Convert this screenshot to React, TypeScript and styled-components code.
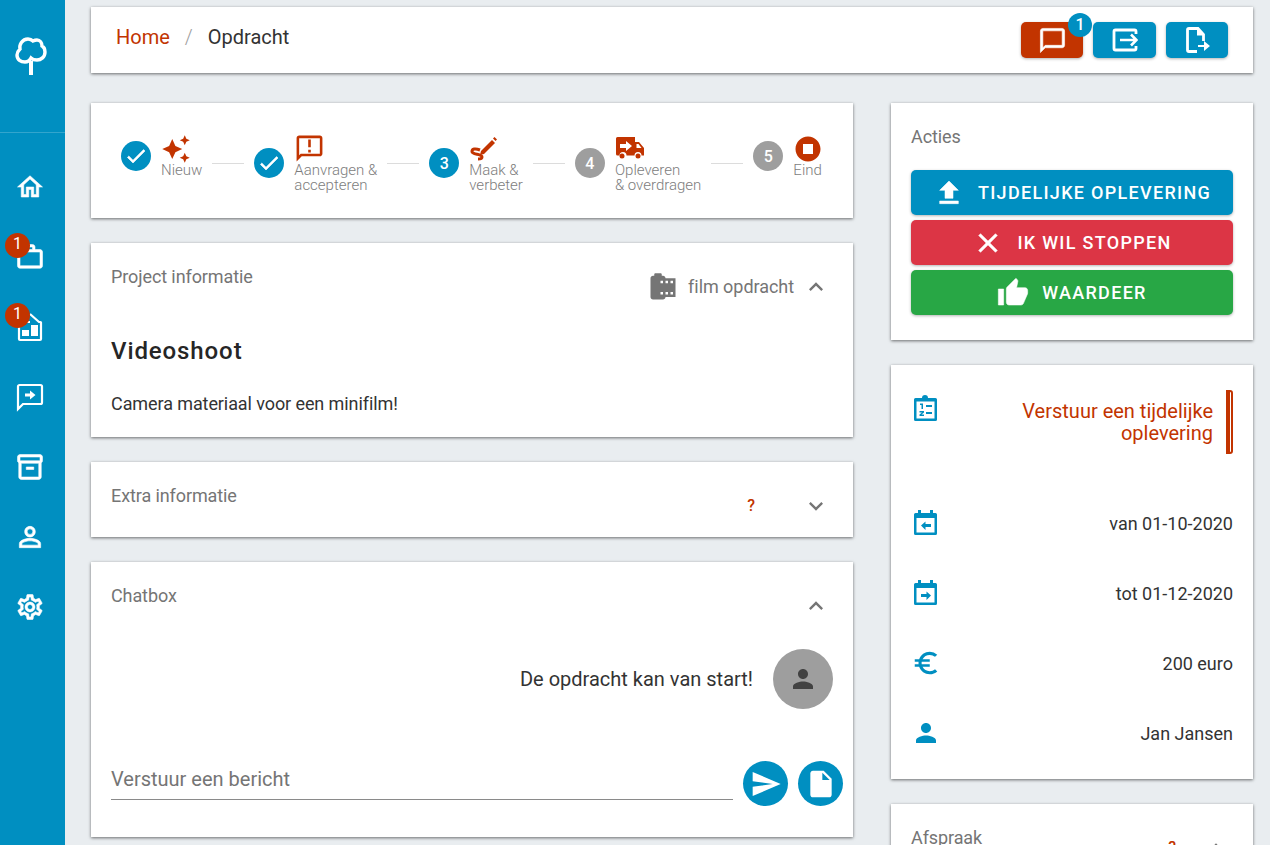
import React from 'react'
import styled, { createGlobalStyle } from 'styled-components'
import {
  MdAutoAwesome,
  MdOutlineAnnouncement,
  MdStopCircle,
  MdCheck,
  MdFileUpload,
  MdClose,
  MdThumbUp,
  MdExpandLess,
  MdExpandMore,
  MdCameraRoll,
  MdSend,
  MdInsertDriveFile,
  MdPerson,
  MdEuroSymbol,
  MdOutlineHome,
  MdWorkOutline,
  MdOutlineInventory2,
  MdPersonOutline,
  MdOutlineSettings,
  MdChatBubbleOutline,
} from 'react-icons/md'

const blue = '#008fc1'
const red = '#c23400'

const GlobalStyle = createGlobalStyle`
  html, body {
    margin: 0;
    height: 100%;
    overflow: hidden;
    background: #e9edf0;
    font-family: Roboto, "Liberation Sans", sans-serif;
  }
  * { box-sizing: border-box; }
  svg [fill='none'] { stroke: none; }
`

const Shell = styled.div`
  display: flex;
  height: 845px;
  overflow: hidden;
`

const Sidebar = styled.nav`
  width: 65px;
  flex-shrink: 0;
  background: ${blue};
  color: #fff;
`

const LogoArea = styled.div`
  height: 133px;
  border-bottom: 1px solid rgba(255, 255, 255, 0.2);
  display: flex;
  justify-content: center;
  padding: 36px 3px 0 0;
`

const NavList = styled.div`
  display: flex;
  flex-direction: column;
  padding-top: 19px;
`

const NavItem = styled.div`
  position: relative;
  height: 70px;
  display: flex;
  align-items: center;
  justify-content: center;
  padding-right: 5px;

  & > svg[stroke='currentColor'] {
    stroke-width: 0.45;
  }
`

const NavBadge = styled.span`
  position: absolute;
  left: 5px;
  top: 11px;
  width: 25px;
  height: 25px;
  border-radius: 50%;
  background: ${red};
  color: #fff;
  font-size: 16px;
  line-height: 22px;
  text-align: center;
`

const Content = styled.div`
  flex: 1;
  padding: 7px 17px 0 26px;
`

const Card = styled.section`
  background: #fff;
  box-shadow: 0 1px 3px rgba(0, 0, 0, 0.55);
`

const TopBar = styled(Card)`
  height: 66px;
  display: flex;
  justify-content: space-between;
  padding: 15px 25px 0;
  margin-bottom: 30px;
`

const Breadcrumb = styled.div`
  display: flex;
  gap: 15px;
  font-size: 20px;
  line-height: 30px;
  color: #333;
`

const CrumbLink = styled.span`
  color: ${red};
`

const CrumbSep = styled.span`
  color: #9e9e9e;
  font-weight: 300;
`

const TopActions = styled.div`
  display: flex;
  gap: 10px;
`

const TopButton = styled.div<{ $bg: string; $w: number }>`
  position: relative;
  width: ${(p) => p.$w}px;
  height: 36px;
  border-radius: 5px;
  background: ${(p) => p.$bg};
  color: #fff;
  display: flex;
  align-items: center;
  justify-content: center;
  box-shadow: 0 1px 3px rgba(0, 0, 0, 0.3);

  & > svg[stroke='currentColor'] {
    stroke-width: 0.5;
  }
`

const TopBadge = styled.span`
  position: absolute;
  right: -9px;
  top: -9px;
  width: 24px;
  height: 24px;
  border-radius: 50%;
  background: ${blue};
  color: #fff;
  font-size: 16px;
  font-weight: 500;
  line-height: 23px;
  text-align: center;
`

const Columns = styled.div`
  display: flex;
  justify-content: space-between;
  align-items: flex-start;
`

const LeftColumn = styled.div`
  width: 762px;
  display: flex;
  flex-direction: column;
  gap: 25px;
`

const RightColumn = styled.div`
  width: 362px;
  display: flex;
  flex-direction: column;
  gap: 25px;
`

const StepperCard = styled(Card)`
  height: 115px;
  display: flex;
  align-items: flex-start;
  gap: 10px;
  padding: 31px 0 0 30px;
`

const Step = styled.div<{ $tall: boolean }>`
  display: flex;
  align-items: center;
  gap: 10px;
  height: ${(p) => (p.$tall ? 58 : 44)}px;
`

const StepCircle = styled.div<{ $bg: string }>`
  width: 30px;
  height: 30px;
  flex-shrink: 0;
  border-radius: 50%;
  background: ${(p) => p.$bg};
  color: #fff;
  font-size: 16px;
  font-weight: 500;
  display: flex;
  align-items: center;
  justify-content: center;

  & > svg {
    stroke-width: 0.6;
  }
`

const StepBody = styled.div`
  display: flex;
  flex-direction: column;
  color: ${red};
  align-self: flex-start;
`

const StepIcon = styled.div`
  height: 29px;
  display: flex;
  align-items: center;
  overflow: visible;
`

const StepLabel = styled.div`
  font-size: 15px;
  font-weight: 300;
  line-height: 15px;
  color: #7d7d7d;
  white-space: nowrap;
`

const StepLine = styled.div`
  width: 32px;
  height: 1px;
  margin-top: 29px;
  background: #dcdcdc;
`

const Panel = styled(Card)`
  padding: 20px;
`

const PanelHead = styled.div`
  display: flex;
  justify-content: space-between;
  align-items: flex-start;
`

const PanelTitle = styled.h3`
  margin: 0;
  font-size: 18px;
  font-weight: 400;
  letter-spacing: -0.1px;
  line-height: 28px;
  color: #757575;
`

const PanelMeta = styled.div<{ $inset: number }>`
  display: flex;
  align-items: center;
  height: 47px;
  padding-right: ${(p) => p.$inset}px;
  color: #757575;
  font-size: 18px;
  letter-spacing: -0.05px;
  gap: 10px;
`

const MetaChevron = styled(MdExpandLess)`
  margin-left: -2px;
`

const Unknown = styled.span<{ $space: number }>`
  color: ${red};
  font-size: 16px;
  font-weight: 500;
  margin-right: ${(p) => p.$space}px;
`

const ProjectPanel = styled(Panel)`
  height: 194px;
`

const ProjectName = styled.h2`
  margin: 24px 0 0;
  font-size: 24px;
  font-weight: 500;
  letter-spacing: 0.9px;
  line-height: 34px;
  color: #262626;
`

const ProjectText = styled.p`
  margin: 24px 0 0;
  font-size: 18px;
  letter-spacing: -0.09px;
  line-height: 24px;
  color: #333;
`

const ExtraPanel = styled(Panel)`
  height: 75px;
`

const ChatPanel = styled(Panel)`
  height: 275px;
  padding-right: 10px;
`

const ChatMessage = styled.div`
  display: flex;
  justify-content: flex-end;
  align-items: center;
  gap: 20px;
  margin: 20px 10px 0 0;
  font-size: 20px;
  color: #333;
`

const Avatar = styled.div`
  width: 60px;
  height: 60px;
  border-radius: 50%;
  background: #9e9e9e;
  color: #424242;
  display: flex;
  align-items: center;
  justify-content: center;
`

const ChatForm = styled.div`
  display: flex;
  align-items: flex-end;
  gap: 10px;
  margin-top: 52px;
`

const ChatInput = styled.div`
  flex: 1;
  height: 39px;
  border-bottom: 1px solid #8a8a8a;
  font-size: 20px;
  line-height: 36px;
  color: #757575;
`

const RoundButton = styled.div`
  width: 45px;
  height: 45px;
  border-radius: 50%;
  background: ${blue};
  color: #fff;
  display: flex;
  align-items: center;
  justify-content: center;
  margin-bottom: -6px;
`

const ActionsPanel = styled(Panel)`
  height: 237px;
`

const ActionList = styled.div`
  display: flex;
  flex-direction: column;
  gap: 5px;
  margin-top: 19px;
`

const ActionButton = styled.div<{ $bg: string }>`
  height: 45px;
  border-radius: 5px;
  background: ${(p) => p.$bg};
  color: #fff;
  font-size: 18px;
  font-weight: 500;
  letter-spacing: 1.3px;
  display: flex;
  align-items: center;
  justify-content: center;
  gap: 13px;
  box-shadow: 0 1px 3px rgba(0, 0, 0, 0.3);

  & > svg {
    stroke-width: 0.4;
  }
`

const TaskCard = styled(Card)`
  height: 414px;
  padding: 25px 20px 0;
`

const TaskRow = styled.div`
  height: 70px;
  display: flex;
  justify-content: space-between;
  align-items: center;
  color: ${blue};
`

const TaskHighlight = styled.div`
  height: 98px;
  display: flex;
  justify-content: space-between;
  align-items: flex-start;
  color: ${blue};
`

const HighlightBox = styled.div`
  display: flex;
  gap: 13px;
`

const HighlightText = styled.div`
  width: 250px;
  padding-top: 10px;
  font-size: 20px;
  line-height: 22px;
  text-align: right;
  color: ${red};
`

const HighlightMarker = styled.div`
  width: 7px;
  height: 64px;
  border: 2px solid ${red};
  border-left-width: 4px;
  border-radius: 0 3px 3px 0;
`

const TaskValue = styled.span`
  font-size: 18px;
  color: #333;
`

const AppointmentCard = styled(Panel)`
  height: 100px;
`

const ClipboardSvg = styled.svg`
  margin-top: 5px;
`

const Logo = () => (
  <svg width="34" height="40" viewBox="0 0 34 40" fill="none" stroke="#fff" strokeWidth="3.4">
    <path d="M17 25v14" strokeWidth="4" stroke="#fff" />
    <path stroke="#fff" d="M11 26c-4 0-8-2-8-7 0-3 2-5 3-6-1-4 2-10 8-10 2 0 4 1 5 2 2-1 3-1 4-1 3 0 5 3 5 6 2 1 3 3 3 6 0 5-4 8-8 8-3 0-5-1-6-2-1 2-3 4-6 4z" />
  </svg>
)

const DocChart = () => (
  <svg width="30" height="30" viewBox="0 0 30 30">
    <path fill="transparent" stroke="#fff" strokeWidth="2.2" d="M15 2l9 8h1.500a.500.500 0 0 1 .500.500V27a1 1 0 0 1-1 1H5a1 1 0 0 1-1-1V10.500a.500.500 0 0 1 .500-.500H15" />
    <rect x="7" y="18" width="7" height="6" fill="#fff" />
    <rect x="16" y="13" width="7" height="11" fill="#fff" />
  </svg>
)

const ChatArrow = () => (
  <svg width="30" height="30" viewBox="0 0 30 30">
    <path fill="transparent" d="M3 27V4.500A1.500 1.500 0 0 1 4.500 3h21A1.500 1.500 0 0 1 27 4.500v16a1.500 1.500 0 0 1-1.500 1.500H8z" stroke="#fff" strokeWidth="2.2" />
    <path d="M10 11.500h5V8.500l5.500 4.500-5.500 4.500v-3h-5z" fill="#fff" />
  </svg>
)

const BoxArrow = () => (
  <svg width="26" height="26" viewBox="0 0 26 26">
    <path fill="transparent" stroke="#fff" d="M24 7V4.500A1.500 1.500 0 0 0 22.500 3h-19A1.500 1.500 0 0 0 2 4.500v17A1.500 1.500 0 0 0 3.500 23h19a1.500 1.500 0 0 0 1.500-1.500V19" strokeWidth="2.8" />
    <path fill="transparent" stroke="#fff" d="M8 13h16M19 7.500l5.500 5.500-5.500 5.500" strokeWidth="2.6" />
  </svg>
)

const FileArrow = () => (
  <svg width="26" height="26" viewBox="0 0 26 26">
    <path fill="transparent" d="M13 24.500H5a1.500 1.500 0 0 1-1.500-1.500V3A1.500 1.500 0 0 1 5 1.500h9l5.500 6V14" stroke="#fff" strokeWidth="2.8" />
    <path d="M13 1.500v7h7z" fill="#fff" />
    <path d="M14 18h6v-4l6 5-6 5v-4h-6z" fill="#fff" />
  </svg>
)

const PenScribble = () => (
  <svg width="30" height="30" viewBox="0 0 30 30">
    <path fill="transparent" stroke={red} d="M11 16c-5-2-8-1-8 1.500 0 3.500 10 2 10 5.500 0 1.500-2 2-4 2" strokeWidth="3" />
    <path d="M12 17L23 6l3 3-11 11-4 1z" fill={red} />
    <path d="M24 4.500l1.500-1.500 2.500 2.500-1.500 1.500z" fill={red} />
  </svg>
)

const TruckArrow = () => (
  <svg width="30" height="30" viewBox="0 0 30 30">
    <path fill={red} d="M1 4.500A1.500 1.500 0 0 1 2.500 3H20v5h4l5 6v7.500h-2.500a3.500 3.500 0 0 0-7 0h-8a3.500 3.500 0 0 0-7 0H2.500A1.500 1.500 0 0 1 1 20z" />
    <circle cx="7" cy="22" r="2.500" fill={red} />
    <circle cx="23" cy="22" r="2.500" fill={red} />
    <path fill="#fff" d="M5 10h6V7l6 5-6 5v-3H5zM21.500 10h2l3 4h-5z" />
  </svg>
)

const ClipboardList = () => (
  <ClipboardSvg width="30" height="32" viewBox="0 0 30 32">
    <path d="M3 4.500A1.500 1.500 0 0 1 4.500 3H11a3 3 0 0 1 6 0h0 1 6.500A1.500 1.500 0 0 1 26 4.500v20a1.500 1.500 0 0 1-1.500 1.500h-20A1.500 1.500 0 0 1 3 24.500z" fill={blue} />
    <rect x="5.500" y="6.500" width="18" height="17" fill="#fff" />
    <rect x="15" y="10" width="6" height="2" fill={blue} />
    <rect x="15" y="17" width="6" height="2" fill={blue} />
    <path d="M9 8.500h3v5.500h-1.500V10H9zM8.500 16h4.500v1.500l-2.500 2H13V21H8.500v-1.500l2.500-2H8.500z" fill={blue} />
  </ClipboardSvg>
)

const CalendarArrow = ({ back }: { back: boolean }) => (
  <svg width="30" height="26" viewBox="0 0 30 26">
    <path d="M3 4.500A1.500 1.500 0 0 1 4.500 3H7V0h3v3h9V0h3v3h2.500A1.500 1.500 0 0 1 26 4.500v19a1.500 1.500 0 0 1-1.500 1.500h-20A1.500 1.500 0 0 1 3 23.500z" fill={blue} />
    <rect x="5.500" y="8" width="18" height="14.500" fill="#fff" />
    <path
      d={back ? 'M10 15.500l4.500-4v2.500H20v3h-5.500V20z' : 'M20 15.500l-4.500-4v2.500H10v3h5.500V20z'}
      fill={blue}
    />
  </svg>
)

const steps = [
  { label: ['Nieuw'], done: true, n: 1, icon: <MdAutoAwesome size={30} />, bg: blue },
  { label: ['Aanvragen &', 'accepteren'], done: true, n: 2, icon: <MdOutlineAnnouncement size={31} />, bg: blue },
  { label: ['Maak &', 'verbeter'], done: false, n: 3, icon: <PenScribble />, bg: blue },
  { label: ['Opleveren', '& overdragen'], done: false, n: 4, icon: <TruckArrow />, bg: '#9e9e9e' },
  { label: ['Eind'], done: false, n: 5, icon: <MdStopCircle size={30} />, bg: '#9e9e9e' },
]

const App = () => {
  return (
    <>
      <GlobalStyle />
      <Shell>
        <Sidebar>
          <LogoArea>
            <Logo />
          </LogoArea>
          <NavList>
            <NavItem><MdOutlineHome size={30} /></NavItem>
            <NavItem><MdWorkOutline size={30} /><NavBadge>1</NavBadge></NavItem>
            <NavItem><DocChart /><NavBadge>1</NavBadge></NavItem>
            <NavItem><ChatArrow /></NavItem>
            <NavItem><MdOutlineInventory2 size={30} /></NavItem>
            <NavItem><MdPersonOutline size={32} /></NavItem>
            <NavItem><MdOutlineSettings size={30} /></NavItem>
          </NavList>
        </Sidebar>
        <Content>
          <TopBar>
            <Breadcrumb>
              <CrumbLink>Home</CrumbLink>
              <CrumbSep>/</CrumbSep>
              <span>Opdracht</span>
            </Breadcrumb>
            <TopActions>
              <TopButton $bg={red} $w={62}>
                <MdChatBubbleOutline size={29} />
                <TopBadge>1</TopBadge>
              </TopButton>
              <TopButton $bg={blue} $w={63}><BoxArrow /></TopButton>
              <TopButton $bg={blue} $w={62}><FileArrow /></TopButton>
            </TopActions>
          </TopBar>
          <Columns>
            <LeftColumn>
              <StepperCard>
                {steps.map((s, i) => (
                  <React.Fragment key={s.n}>
                    <Step $tall={s.label.length > 1}>
                      <StepCircle $bg={s.bg}>{s.done ? <MdCheck size={24} /> : s.n}</StepCircle>
                      <StepBody>
                        <StepIcon>{s.icon}</StepIcon>
                        {s.label.map((l) => (
                          <StepLabel key={l}>{l}</StepLabel>
                        ))}
                      </StepBody>
                    </Step>
                    {i < steps.length - 1 && <StepLine />}
                  </React.Fragment>
                ))}
              </StepperCard>
              <ProjectPanel>
                <PanelHead>
                  <PanelTitle>Project informatie</PanelTitle>
                  <PanelMeta $inset={3}>
                    <MdCameraRoll size={30} />
                    film opdracht
                    <MetaChevron size={28} />
                  </PanelMeta>
                </PanelHead>
                <ProjectName>Videoshoot</ProjectName>
                <ProjectText>Camera materiaal voor een minifilm!</ProjectText>
              </ProjectPanel>
              <ExtraPanel>
                <PanelHead>
                  <PanelTitle>Extra informatie</PanelTitle>
                  <PanelMeta $inset={3}>
                    <Unknown $space={37}>?</Unknown>
                    <MdExpandMore size={28} />
                  </PanelMeta>
                </PanelHead>
              </ExtraPanel>
              <ChatPanel>
                <PanelHead>
                  <PanelTitle>Chatbox</PanelTitle>
                  <PanelMeta $inset={13}>
                    <MdExpandLess size={28} />
                  </PanelMeta>
                </PanelHead>
                <ChatMessage>
                  De opdracht kan van start!
                  <Avatar><MdPerson size={30} /></Avatar>
                </ChatMessage>
                <ChatForm>
                  <ChatInput>Verstuur een bericht</ChatInput>
                  <RoundButton><MdSend size={32} /></RoundButton>
                  <RoundButton><MdInsertDriveFile size={32} /></RoundButton>
                </ChatForm>
              </ChatPanel>
            </LeftColumn>
            <RightColumn>
              <ActionsPanel>
                <PanelTitle>Acties</PanelTitle>
                <ActionList>
                  <ActionButton $bg={blue}><MdFileUpload size={32} />TIJDELIJKE OPLEVERING</ActionButton>
                  <ActionButton $bg="#dc3545"><MdClose size={32} />IK WIL STOPPEN</ActionButton>
                  <ActionButton $bg="#28a745"><MdThumbUp size={32} />WAARDEER</ActionButton>
                </ActionList>
              </ActionsPanel>
              <TaskCard>
                <TaskHighlight>
                  <ClipboardList />
                  <HighlightBox>
                    <HighlightText>Verstuur een tijdelijke oplevering</HighlightText>
                    <HighlightMarker />
                  </HighlightBox>
                </TaskHighlight>
                <TaskRow>
                  <CalendarArrow back />
                  <TaskValue>van 01-10-2020</TaskValue>
                </TaskRow>
                <TaskRow>
                  <CalendarArrow back={false} />
                  <TaskValue>tot 01-12-2020</TaskValue>
                </TaskRow>
                <TaskRow>
                  <MdEuroSymbol size={30} />
                  <TaskValue>200 euro</TaskValue>
                </TaskRow>
                <TaskRow>
                  <MdPerson size={30} />
                  <TaskValue>Jan Jansen</TaskValue>
                </TaskRow>
              </TaskCard>
              <AppointmentCard>
                <PanelHead>
                  <PanelTitle>Afspraak</PanelTitle>
                  <PanelMeta $inset={3}>
                    <Unknown $space={16}>?</Unknown>
                    <MdExpandLess size={28} />
                  </PanelMeta>
                </PanelHead>
              </AppointmentCard>
            </RightColumn>
          </Columns>
        </Content>
      </Shell>
    </>
  )
}

export default App
